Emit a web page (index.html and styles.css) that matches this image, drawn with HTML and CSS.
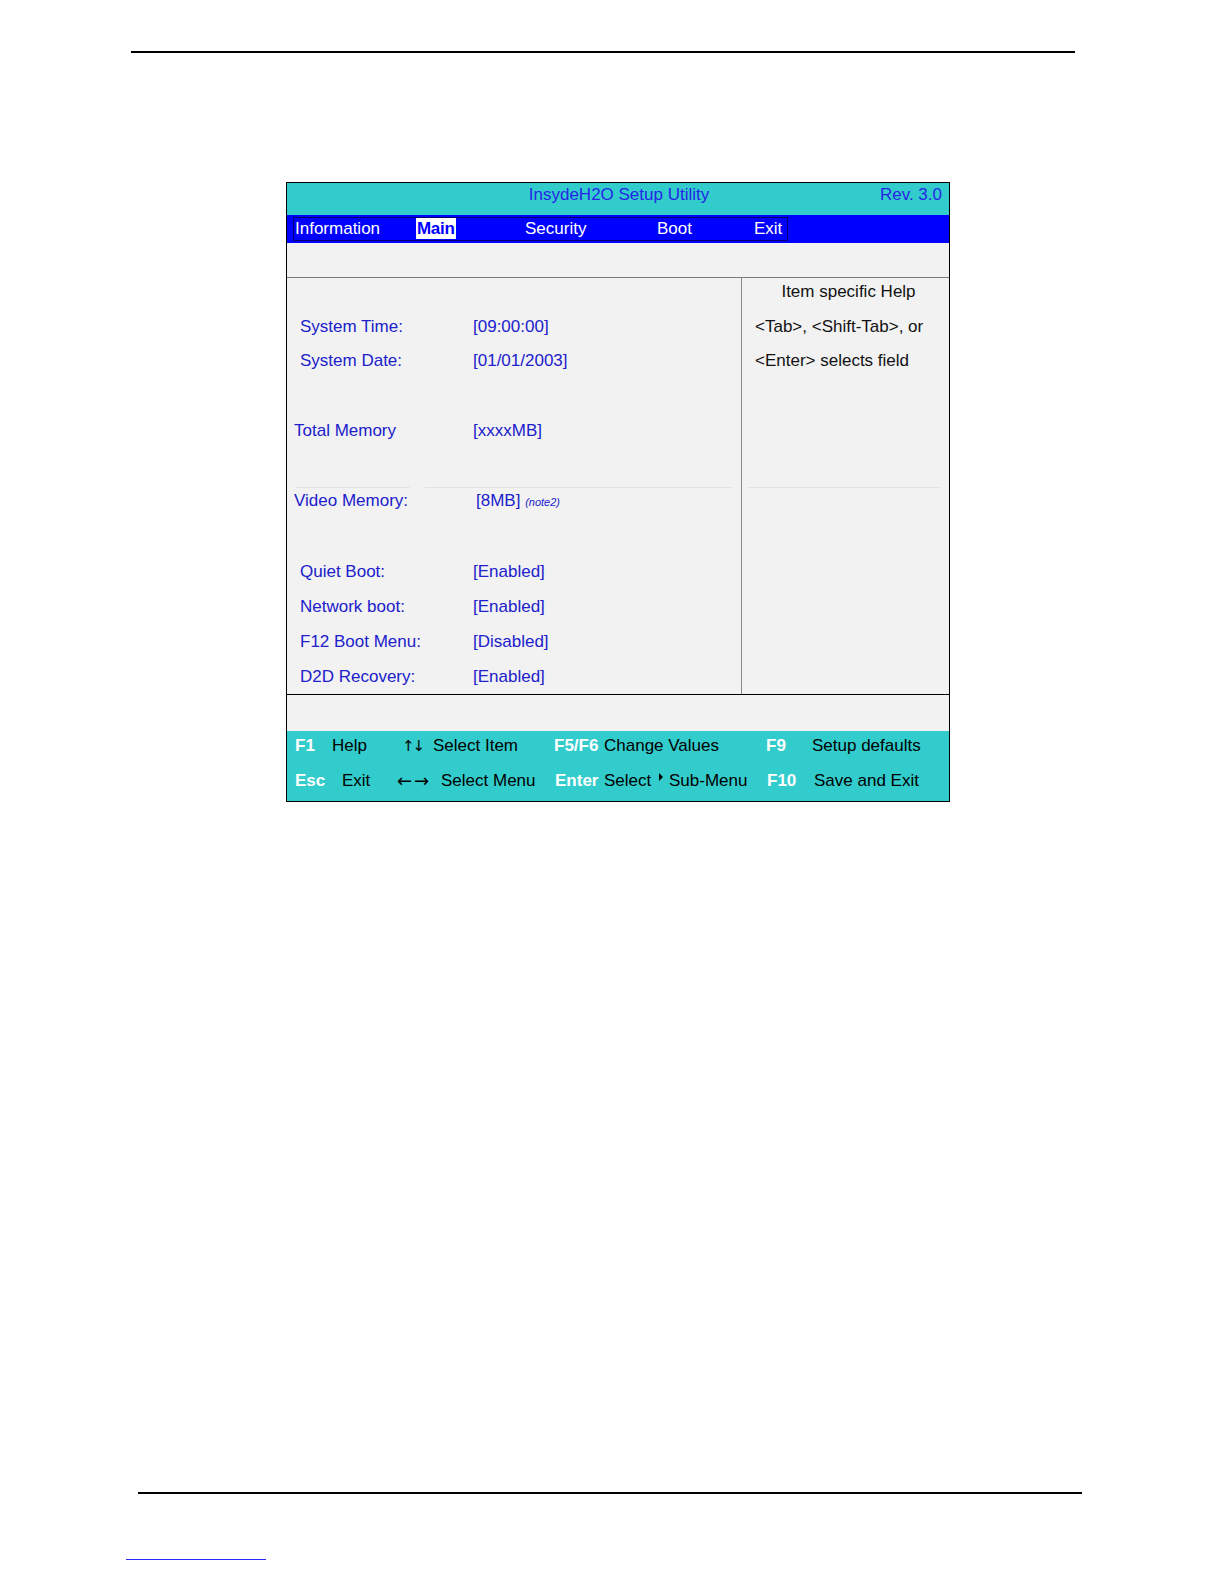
FILE: index.html
```html
<!DOCTYPE html>
<html lang="en">
<head>
<meta charset="utf-8">
<title>InsydeH2O Setup Utility - Main</title>
<link rel="stylesheet" href="styles.css">
</head>
<body>
<div class="page">
  <div class="rule-top"></div>

  <div class="bios">
    <div class="titlebar">
      <span class="title">InsydeH2O Setup Utility</span>
      <span class="rev">Rev. 3.0</span>
    </div>

    <div class="menubar">
      <div class="menu">
        <span>Information</span>
        <span><span class="active">Main</span></span>
        <span>Security</span>
        <span>Boot</span>
        <span>Exit</span>
      </div>
    </div>

    <div class="bar bar-top"></div>

    <div class="main">
      <div class="settings">
        <div class="row first"><span>System Time:</span><span>[09:00:00]</span></div>
        <div class="row"><span>System Date:</span><span>[01/01/2003]</span></div>

        <div class="row outdent gap-a"><span>Total Memory</span><span>[xxxxMB]</span></div>

        <div class="sep-left"><i class="seg1"></i><i class="seg2"></i></div>
        <div class="row outdent video"><span>Video Memory:</span><span class="vval">[8MB] <em class="note">(note2)</em></span></div>

        <div class="row tall gap-b"><span>Quiet Boot:</span><span>[Enabled]</span></div>
        <div class="row tall"><span>Network boot:</span><span>[Enabled]</span></div>
        <div class="row tall"><span>F12 Boot Menu:</span><span>[Disabled]</span></div>
        <div class="row tall"><span>D2D Recovery:</span><span>[Enabled]</span></div>
      </div>

      <div class="help">
        <div class="help-head">Item specific Help</div>
        <div class="help-line">&lt;Tab&gt;, &lt;Shift-Tab&gt;, or</div>
        <div class="help-line">&lt;Enter&gt; selects field</div>
        <div class="sep-right"></div>
      </div>
    </div>

    <div class="bar bar-bottom"></div>

    <div class="footer">
      <div class="frow frow1">
        <span class="key">F1</span><span>Help</span>
        <span class="arrows">&#8593;&#8595;</span><span>Select Item</span>
        <span class="key">F5/F6</span><span>Change Values</span>
        <span class="key">F9</span><span>Setup defaults</span>
      </div>
      <div class="frow frow2">
        <span class="key">Esc</span><span>Exit</span>
        <span class="arrows">&#8592;&#8594;</span><span>Select Menu</span>
        <span class="key">Enter</span><span>Select</span>
        <span class="tri-cell"><span class="tri"></span></span><span>Sub-Menu</span>
        <span class="key">F10</span><span>Save and Exit</span>
      </div>
    </div>
  </div>

  <div class="rule-bottom"></div>
  <div class="link-line"></div>
</div>
</body>
</html>
```

FILE: styles.css
```css
html, body {
  margin: 0;
  padding: 0;
  background: #ffffff;
}

body {
  font-family: "Liberation Sans", Arial, sans-serif;
  font-size: 17px;
  color: #000;
}

.page {
  box-sizing: border-box;
  height: 1584px;
  overflow: hidden;
  padding-top: 51px;
}

.rule-top {
  margin-left: 131px;
  width: 944px;
  height: 2px;
  background: #000;
}

.bios {
  box-sizing: border-box;
  margin-top: 129px;
  margin-left: 286px;
  width: 664px;
  border: 1px solid #000;
  background: #f2f2f2;
}

/* title bar */
.titlebar {
  height: 32px;
  background: #33cccc;
  position: relative;
  line-height: 24px;
  text-align: center;
  color: #2626e6;
}

.title {
  display: inline-block;
  padding-left: 2px;
}

.rev {
  position: absolute;
  right: 7px;
  top: 0;
}

/* menu bar */
.menubar {
  height: 28px;
  background: #0000ff;
  padding: 2px 0 0 6px;
  box-sizing: border-box;
}

.menu {
  box-sizing: border-box;
  width: 495px;
  height: 24px;
  border: 1px solid #00006a;
  display: grid;
  grid-template-columns: 122px 108px 132px 97px auto;
  line-height: 22px;
  color: #ffffff;
  padding-left: 1px;
}

.active {
  display: inline-block;
  background: #ffffff;
  color: #0000ff;
  line-height: 21px;
  padding: 0 1px;
  margin-left: -1px;
  font-weight: bold;
  letter-spacing: -0.3px;
}

/* grey bars */
.bar {
  background: #f2f2f2;
}

.bar-top {
  height: 34px;
  border-bottom: 1px solid #7a7a7a;
}

.bar-bottom {
  height: 36px;
  border-top: 1px solid #000;
}

/* main area */
.main {
  display: flex;
  height: 416px;
}

.settings {
  box-sizing: border-box;
  width: 455px;
  border-right: 1px solid #8a8a8a;
  padding-top: 32px;
  color: #2020cc;
}

.row {
  display: grid;
  grid-template-columns: 173px auto;
  padding-left: 13px;
  line-height: 34px;
  white-space: nowrap;
}

.row.outdent {
  grid-template-columns: 179px auto;
  padding-left: 7px;
}

.row.tall {
  line-height: 35px;
}

.gap-a {
  margin-top: 36px;
}

.sep-left {
  display: flex;
  margin-top: 39px;
  padding-left: 8px;
  gap: 15px;
}

.sep-left i {
  display: block;
  height: 1px;
  background: #e3e3e3;
}

.sep-left .seg1 {
  width: 115px;
}

.sep-left .seg2 {
  width: 307px;
}

.row.video {
  line-height: 26px;
}

.vval {
  padding-left: 3px;
}

.note {
  font-size: 11px;
  font-style: italic;
}

.gap-b {
  margin-top: 39px;
}

/* help column */
.help {
  flex: 1;
  color: #111;
  white-space: nowrap;
}

.help-head {
  line-height: 28px;
  text-align: center;
  padding-left: 6px;
  margin-bottom: 4px;
}

.help-line {
  line-height: 34px;
  padding-left: 13px;
}

.sep-right {
  margin: 109px 0 0 6px;
  width: 192px;
  height: 1px;
  background: #e3e3e3;
}

/* footer */
.footer {
  background: #33cccc;
  height: 70px;
  box-sizing: border-box;
  padding-left: 8px;
  white-space: nowrap;
}

.frow {
  display: grid;
  line-height: 30px;
}

.frow1 {
  grid-template-columns: 37px 70px 31px 121px 50px 162px 46px auto;
}

.frow2 {
  margin-top: 5px;
  grid-template-columns: 47px 55px 44px 114px 49px 54px 11px 98px 47px auto;
}

.key {
  color: #ffffff;
  font-weight: bold;
}

.arrows {
  font-family: "DejaVu Sans", "Liberation Sans", sans-serif;
  font-size: 15px;
}

.frow1 .arrows {
  letter-spacing: -2px;
}

.frow2 .arrows {
  font-size: 18px;
  letter-spacing: 2px;
}

.tri-cell {
  position: relative;
}

.tri {
  display: inline-block;
  width: 0;
  height: 0;
  border-left: 4px solid #000;
  border-top: 4px solid transparent;
  border-bottom: 4px solid transparent;
  vertical-align: 5px;
  margin-left: 1px;
}

/* page furniture */
.rule-bottom {
  margin-top: 690px;
  margin-left: 138px;
  width: 944px;
  height: 2px;
  background: #000;
}

.link-line {
  margin-top: 65px;
  margin-left: 126px;
  width: 140px;
  height: 1px;
  background: #2b2bff;
}
```
